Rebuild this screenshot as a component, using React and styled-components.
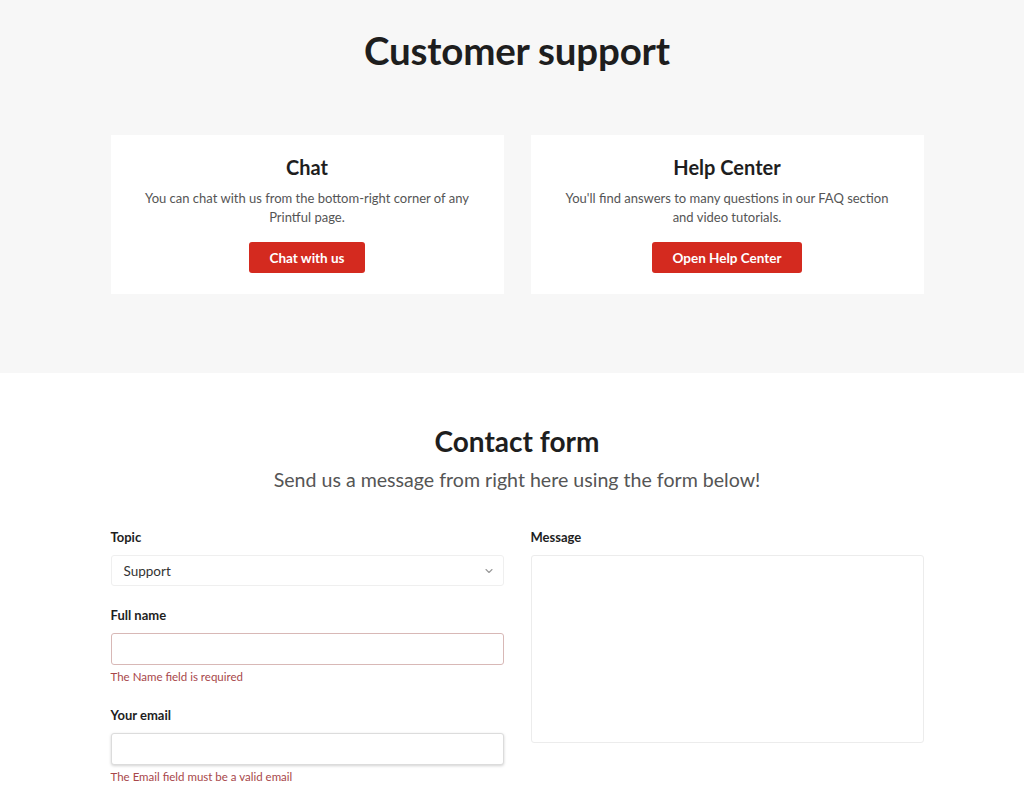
import React from 'react';
import styled, {createGlobalStyle} from 'styled-components';

const GlobalStyle = createGlobalStyle`
  body {
    margin: 0;
    background: #fff;
    font-family: "Lato", "Liberation Sans", sans-serif;
    color: #222;
  }
  * { box-sizing: border-box; }
`;

const Page = styled.div`
  width: 1024px;
`;

// content is centred a few px right of the window centre in the reference
const TopSection = styled.section`
  background: #f7f7f7;
  padding: 28px 0 79px 10px;
`;

const Title = styled.h1`
  margin: 0;
  text-align: center;
  font-size: 38.5px;
  line-height: 44px;
  font-weight: 700;
  color: #1e1e1e;
  letter-spacing: -0.2px;
`;

const Columns = styled.div`
  width: 813px;
  margin: 0 auto;
  display: grid;
  grid-template-columns: 1fr 1fr;
  column-gap: 27px;
`;

const Cards = styled(Columns)`
  margin-top: 63px;
`;

const Card = styled.div`
  background: #fff;
  padding: 20px 30px 21px;
  display: flex;
  flex-direction: column;
  align-items: center;
  text-align: center;
`;

const CardTitle = styled.h3`
  margin: 0;
  font-size: 20px;
  line-height: 24px;
  font-weight: 700;
  color: #1e1e1e;
`;

const CardText = styled.p`
  margin: 10px 0 0;
  font-size: 13px;
  line-height: 19px;
  color: #555;
`;

const RedButton = styled.button`
  margin-top: 15px;
  height: 31px;
  padding: 0 20px;
  border: none;
  border-radius: 3px;
  background: #d42a1f;
  color: #fff;
  font-family: inherit;
  font-size: 13.5px;
  font-weight: 700;
  cursor: pointer;
`;

const FormSection = styled.section`
  padding: 51px 0 40px 10px;
`;

const FormTitle = styled.h2`
  margin: 0;
  text-align: center;
  font-size: 28px;
  line-height: 34px;
  font-weight: 700;
  color: #1e1e1e;
`;

const Subtitle = styled.p`
  margin: 10px 0 0;
  text-align: center;
  font-size: 19.6px;
  line-height: 24px;
  color: #555;
`;

const FormGrid = styled(Columns)`
  margin-top: 37px;
  align-items: start;
`;

const FieldColumn = styled.div`
  display: flex;
  flex-direction: column;
`;

const Field = styled.div`
  display: flex;
  flex-direction: column;
  margin-top: ${p => p.$gap || 0}px;
`;

const Label = styled.label`
  font-size: 13px;
  line-height: 16px;
  font-weight: 700;
  color: #1e1e1e;
  margin-bottom: 10px;
`;

const SelectBox = styled.div`
  height: 31px;
  border: 1px solid #efefef;
  border-radius: 3px;
  background: #fff;
  display: flex;
  align-items: center;
  justify-content: space-between;
  padding: 0 9px 0 12px;
  font-size: 13.5px;
  color: #333;
`;

const Input = styled.input`
  height: 32px;
  width: 100%;
  border: 1px solid ${p => (p.$error ? '#d8b8b6' : '#dcdcdc')};
  border-radius: 3px;
  background: #fff;
  font-family: inherit;
  font-size: 13px;
  padding: 0 12px;
  outline: none;
  box-shadow: ${p => (p.$focus ? '0 1px 3px rgba(0,0,0,0.18)' : 'none')};
`;

const ErrorText = styled.span`
  margin-top: 5px;
  font-size: 11.5px;
  line-height: 14px;
  color: #a8474a;
`;

const TextArea = styled.textarea`
  height: 188px;
  width: 100%;
  border: 1px solid #ececec;
  border-radius: 3px;
  resize: none;
  font-family: inherit;
  outline: none;
`;

const Chevron = () => (
  <svg width="10" height="10" viewBox="0 0 10 10" fill="none">
    <path d="M2 3.5L5 6.5L8 3.5" stroke="#999" strokeWidth="1.1" strokeLinecap="round" strokeLinejoin="round" />
  </svg>
);

export default function App() {
  return (
    <Page>
      <GlobalStyle />
      <TopSection>
        <Title>Customer support</Title>
        <Cards>
          <Card>
            <CardTitle>Chat</CardTitle>
            <CardText>You can chat with us from the bottom-right corner of any<br />Printful page.</CardText>
            <RedButton>Chat with us</RedButton>
          </Card>
          <Card>
            <CardTitle>Help Center</CardTitle>
            <CardText>You'll find answers to many questions in our FAQ section<br />and video tutorials.</CardText>
            <RedButton>Open Help Center</RedButton>
          </Card>
        </Cards>
      </TopSection>
      <FormSection>
        <FormTitle>Contact form</FormTitle>
        <Subtitle>Send us a message from right here using the form below!</Subtitle>
        <FormGrid>
          <FieldColumn>
            <Field>
              <Label>Topic</Label>
              <SelectBox>
                <span>Support</span>
                <Chevron />
              </SelectBox>
            </Field>
            <Field $gap={21}>
              <Label>Full name</Label>
              <Input $error />
              <ErrorText>The Name field is required</ErrorText>
            </Field>
            <Field $gap={23}>
              <Label>Your email</Label>
              <Input $focus />
              <ErrorText>The Email field must be a valid email</ErrorText>
            </Field>
          </FieldColumn>
          <FieldColumn>
            <Field>
              <Label>Message</Label>
              <TextArea />
            </Field>
          </FieldColumn>
        </FormGrid>
      </FormSection>
    </Page>
  );
}
